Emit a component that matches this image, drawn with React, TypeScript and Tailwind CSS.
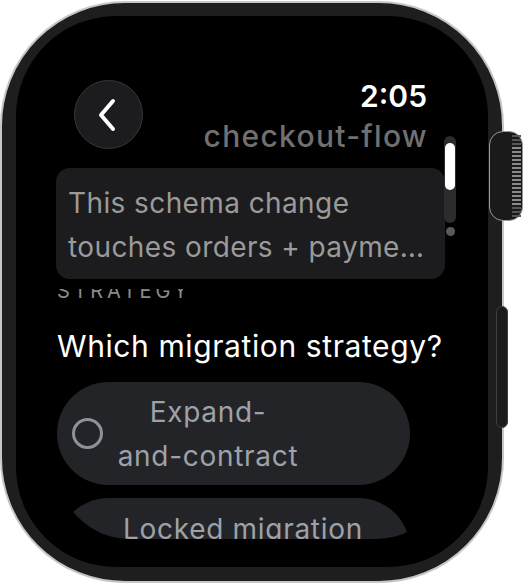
const ridges = Array.from({ length: 21 });

export default function App() {
  return (
    <div className="relative w-[526px] h-[584px] bg-white overflow-hidden font-[Inter,sans-serif]">
      {/* Watch case */}
      <div className="absolute left-0 top-[1px] w-[504px] h-[582px] rounded-[125px] bg-[#1e1e1e] border-2 border-[#c6c6c6]" />

      {/* Digital crown */}
      <div className="absolute left-[489px] top-[131px] w-[34px] h-[90px] rounded-[14px] bg-[#1a1a1a] border border-[#9a9a9a] flex flex-col justify-center items-end gap-[2px] pr-[1px]">
        {ridges.map((_, i) => (
          <div
            key={i}
            className={`w-[9px] h-[2px] ${i < 3 || i > 17 ? 'bg-[#555]' : 'bg-[#8a8a8a]'}`}
          />
        ))}
      </div>

      {/* Side button */}
      <div className="absolute left-[496px] top-[306px] w-[12px] h-[122px] rounded-full bg-[#1b1b1b] border border-[#3e3e3e]" />

      {/* Screen */}
      <div className="absolute left-[16px] top-[16px] w-[472px] h-[551px] rounded-[100px] bg-black overflow-hidden">
        <div className="flex flex-col h-full">
          {/* Header */}
          <div className="flex items-start justify-between pl-[58px] pr-[61px] pt-[64px]">
            <button className="w-[69px] h-[69px] rounded-full bg-[#1c1c1e] border border-[#38383a] flex items-center justify-center">
              <svg width="20" height="34" viewBox="0 0 20 34" className="-ml-[4px]">
                <polyline
                  points="16,3 4,17 16,31"
                  fill="none"
                  stroke="white"
                  strokeWidth="4"
                  strokeLinecap="round"
                  strokeLinejoin="round"
                />
              </svg>
            </button>
            <div className="text-right mt-[1px]">
              <div className="text-[30px] leading-[30px] font-semibold text-white">2:05</div>
              <div className="mt-[10px] -mr-[1px] text-[30px] leading-[30px] font-medium tracking-[1.3px] text-[#707070]">
                checkout-flow
              </div>
            </div>
          </div>

          {/* Context card */}
          <div className="ml-[40px] mt-[17px] w-[389px] rounded-[14px] bg-[#1c1c1e] pt-[13px] pb-[10px] pl-[12px] pr-[14px] text-[28px] leading-[44px] tracking-[0.4px] text-[#9a9a9a]">
            <p className="whitespace-nowrap">This schema change</p>
            <p className="truncate">touches orders + payments tables in one deploy.</p>
          </div>

          {/* Scrolling list */}
          <div className="ml-[41px] mt-[10px] w-[392px] h-[250px] overflow-hidden rounded-b-[73px]">
            <div className="-mt-[10px] text-[20px] leading-[24px] tracking-[3.8px] text-[#8a8a8a] uppercase">
              Strategy
            </div>
            <div className="mt-[27px] text-[30px] leading-[32px] tracking-[0.6px] text-white whitespace-nowrap">
              Which migration strategy?
            </div>
            <div className="mt-[20px] flex flex-col gap-[13px]">
              <button className="w-[353px] h-[103px] rounded-full bg-[#232428] flex items-center pl-[15px]">
                <span className="w-[31px] h-[31px] rounded-full border-[3px] border-[#8e9199] shrink-0" />
                <span className="ml-[5px] w-[200px] text-center text-[28px] leading-[44px] tracking-[0.7px] text-[#9ea1a8]">
                  <span className="block whitespace-nowrap">Expand-</span>
                  <span className="block whitespace-nowrap">and-contract</span>
                </span>
              </button>
              <button className="w-[353px] h-[103px] rounded-full bg-[#232428] flex items-start pl-[15px] pt-[9px]">
                <span className="mt-[26px] w-[31px] h-[31px] rounded-full border-[3px] border-[#8e9199] shrink-0" />
                <span className="ml-[20px] whitespace-nowrap text-[28px] leading-[44px] tracking-[0.7px] text-[#9ea1a8]">
                  Locked migration
                </span>
              </button>
            </div>
          </div>
        </div>

        {/* Scroll indicator */}
        <div className="absolute left-[428px] top-[120px] flex flex-col items-center">
          <div className="w-[12px] h-[87px] rounded-full bg-[#2c2c2e] flex justify-center pt-[7px]">
            <div className="w-[10px] h-[47px] rounded-full bg-white" />
          </div>
          <div className="mt-[4px] w-[9px] h-[9px] rounded-full bg-[#5a5a5a]" />
        </div>
      </div>
    </div>
  );
}
